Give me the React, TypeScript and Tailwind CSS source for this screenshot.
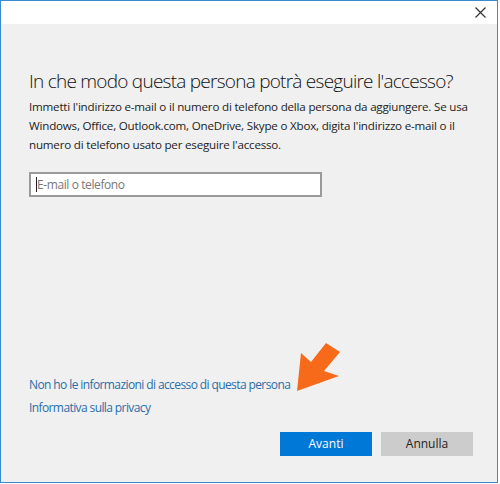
export default function App() {
  return (
    <div className="w-[500px] h-[484px] bg-white" style={{ fontFamily: '"Open Sans", sans-serif' }}>
      <div className="w-[498px] h-[483px] border border-[#3a8ad0] flex flex-col">
        <div className="h-[23px] bg-white flex justify-end items-center pr-[10px]">
          <svg width="11" height="11" viewBox="0 0 11 11" className="mr-[1px]">
            <path d="M0.5 0.5 L10.5 10.5 M10.5 0.5 L0.5 10.5" stroke="#333" strokeWidth="1.2" />
          </svg>
        </div>
        <div className="flex-1 bg-[#f0f0f0] pl-[28px] pr-[20px] flex flex-col">
          <h1 className="mt-[43px] text-[19px] font-light text-[#111] leading-[28px] tracking-[-0.75px] whitespace-nowrap">
            In che modo questa persona potrà eseguire l'accesso?
          </h1>
          <p className="mt-[2px] text-[11.6px] leading-[19px] text-[#222] tracking-[-0.2px]">
            Immetti l'indirizzo e-mail o il numero di telefono della persona da aggiungere. Se usa
            <br />
            Windows, Office, Outlook.com, OneDrive, Skype o Xbox, digita l'indirizzo e-mail o il
            <br />
            numero di telefono usato per eseguire l'accesso.
          </p>
          <div className="mt-[18px] w-[293px] h-[25px] border-2 border-[#9a9a9a] bg-white flex items-center pl-[5px]">
            <span className="w-px h-[15px] bg-[#222]" />
            <span className="text-[12px] text-[#777] tracking-[-0.4px]">E-mail o telefono</span>
          </div>
          <div className="flex-1" />
          <a className="text-[12px] text-[#2a6ea8] tracking-[-0.6px] leading-[20px]">
            Non ho le informazioni di accesso di questa persona
          </a>
          <a className="mt-[3px] text-[12px] text-[#2a6ea8] tracking-[-0.6px] leading-[20px]">
            Informativa sulla privacy
          </a>
          <div className="mt-[14px] mb-[26px] flex justify-end gap-[9px] pr-[4px]">
            <button className="w-[92px] h-[24px] bg-[#0078d7] text-white text-[12px]">Avanti</button>
            <button className="w-[92px] h-[24px] bg-[#cccccc] text-[#222] text-[12px]">Annulla</button>
          </div>
        </div>
      </div>
      <svg className="absolute left-[290px] top-[338px]" width="56" height="58" viewBox="290 338 56 58">
        <polygon
          points="297,391 301,353 311,362 326,343 340,352 324,371 339,376"
          fill="#f76a1a"
        />
      </svg>
    </div>
  );
}
